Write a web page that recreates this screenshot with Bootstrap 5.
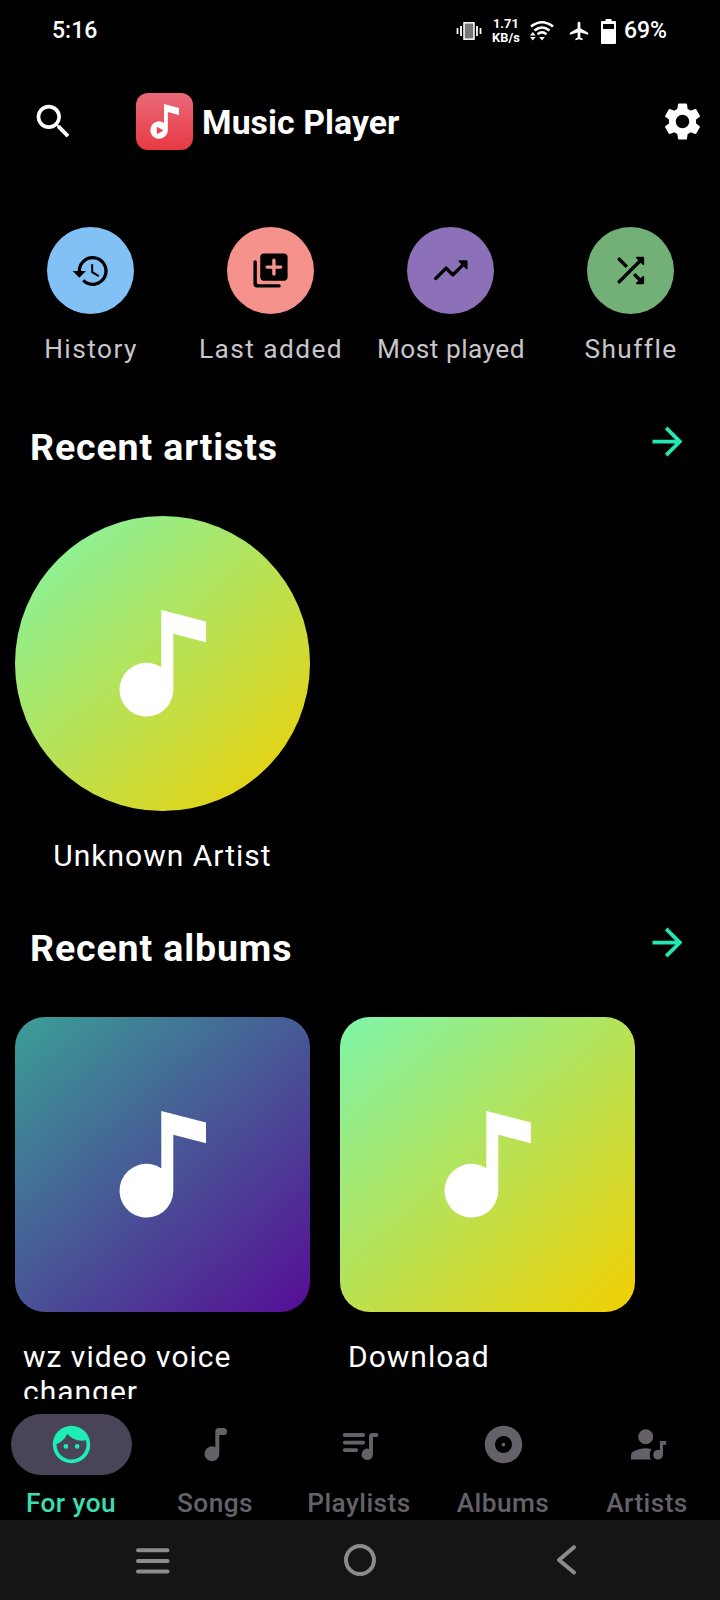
<!DOCTYPE html>
<html lang="en" data-bs-theme="dark">
<head>
<meta charset="utf-8">
<meta name="viewport" content="width=device-width, initial-scale=1">
<title>Music Player</title>
<link href="https://cdn.jsdelivr.net/npm/bootstrap@5.3.0/dist/css/bootstrap.min.css" rel="stylesheet">
<style>
  body { font-family: Roboto, "Liberation Sans", sans-serif; height: 1600px; background: #000; color: #fff; overflow: hidden; }
  svg { display: block; flex: none; }
  .icon-md { width: 45px; height: 45px; }
  .status-bar { height: 62px; padding: 0 53px 0 52px; font-size: 23px; font-weight: 500; line-height: 30px; }
  .net-speed { font-size: 12.8px; font-weight: 700; line-height: 14.5px; width: 30px; margin-left: 9px; }
  .wifi { margin-left: 9px; }
  .plane { margin-left: 14px; }
  .battery { margin-left: 11px; }
  .percent { margin-left: 8px; }
  .app-bar { height: 119px; padding: 0 15px 0 31px; }
  .app-logo { margin-left: 60px; }
  .app-title { font-size: 33.75px; font-weight: 700; line-height: 40px; padding-top: 2px; margin-left: 9px; letter-spacing: .08px; }
  .shortcuts { padding-top: 46px; }
  .shortcut-icon { width: 87px; height: 87px; margin-left: 1px; }
  .shortcut-label { font-size: 26.25px; line-height: 30px; margin-top: 20px; padding-left: 2px; color: #c8c5cb; letter-spacing: 1.45px; }
  .tight { letter-spacing: .5px; }
  .sky { background: #82c1f5; } .coral { background: #f6928c; } .violet { background: #8c70b8; } .leaf { background: #72b077; }
  .section-head { height: 51px; margin-top: 55px; padding: 0 30px; }
  .section-head.second { margin-top: 47px; }
  .section-title { font-size: 37.5px; font-weight: 700; line-height: 46px; margin: 5px 0 0; letter-spacing: .88px; }
  .section-head svg { color: #24e8b4; }
  .tiles { gap: 30px; margin-top: 46px; padding-left: 15px; }
  .tile { width: 295px; }
  .cover { width: 295px; height: 295px; border-radius: 30px; }
  .lime { background: linear-gradient(138deg, #7ef5aa, #f2cf00); }
  .indigo { background: linear-gradient(138deg, #3a9f96, #560d96); }
  .tile-label { font-size: 30px; line-height: 35px; margin-top: 27px; letter-spacing: 1px; }
  .tabs { height: 121px; padding-top: 15px; color: #646268; }
  .tab-pill { width: 121px; height: 61px; margin-left: -1px; }
  .tab-label { font-size: 26.25px; font-weight: 500; line-height: 30px; margin-top: 13px; margin-left: -2px; letter-spacing: .45px; white-space: nowrap; }
  .tab-on { color: #38dfb0; }
  .tab-on .tab-pill { background: #4a4458; color: #1eedb6; }
  .system-nav { height: 80px; background: #151515; }
</style>
</head>
<body class="d-flex flex-column m-0">

<svg width="0" height="0" class="position-absolute" aria-hidden="true">
  <symbol id="cover-note" viewBox="0 0 295 295"><path fill="#fff" d="M146.3 94L191 105.500V126.300L158.300 117.800V174A26.900 26.900 0 1 1 146.300 151.300Z"/></symbol>
  <symbol id="forward" viewBox="0 0 24 24"><path fill="currentColor" d="M12 4l-1.410 1.410L16.170 11H4v2h12.170l-5.580 5.590L12 20l8-8z"/></symbol>
</svg>

<div class="status-bar d-flex align-items-center flex-shrink-0">
  <span>5:16</span>
  <svg class="ms-auto" width="26" height="18" viewBox="0 0 26 18"><rect x="8" y=".8" width="10" height="16.400" fill="#777" stroke="#fff" stroke-width="1.500"/><path d="M5 4v10M21 4v10M1.500 6v6M24.500 6v6" stroke="#fff" stroke-width="1.800"/></svg>
  <div class="net-speed text-center">1.71<br>KB/s</div>
  <svg class="wifi" width="24" height="22" viewBox="0 0 24 22"><g fill="none" stroke="#fff" stroke-width="2.600"><path d="M1 6.500Q12 -2 23 6.500"/><path d="M4.500 10.500Q12 4.500 19.500 10.500"/><path d="M7.500 14.200Q12 10.700 16.500 14.200"/></g><path fill="#fff" d="M0 15.500L2.800 12l2.800 3.500zM0 17h5.600L2.800 20.500zM9.200 17h5.600L12 20.500z"/></svg>
  <svg class="plane" width="22" height="22" viewBox="0 0 24 24"><path fill="#fff" d="M22 16v-2l-8.500-5V3.500c0-.83-.67-1.500-1.500-1.500s-1.500.67-1.500 1.500V9L2 14v2l8.500-2.500V19L8 20.500V22l4-1 4 1v-1.500L13.500 19v-5.500L22 16z"/></svg>
  <svg class="battery" width="15" height="25" viewBox="0 0 15 25"><path fill="#fff" fill-rule="evenodd" d="M4.500 0h6v2H14q1 0 1 1v21q0 1-1 1H1q-1 0-1-1V3q0-1 1-1h3.500zM2 5v5h11V5z"/></svg>
  <span class="percent">69%</span>
</div>

<header class="app-bar d-flex align-items-center flex-shrink-0">
  <svg class="icon-md" viewBox="0 0 24 24"><path fill="#fff" d="M15.500 14h-.79l-.28-.27A6.471 6.471 0 0 0 16 9.500 6.500 6.500 0 1 0 9.500 16c1.610 0 3.090-.59 4.230-1.570l.27.28v.79l5 4.990L20.490 19l-4.990-5zm-6 0C7.010 14 5 11.990 5 9.500S7.010 5 9.500 5 14 7.010 14 9.500 11.990 14 9.500 14z"/></svg>
  <svg class="app-logo" width="57" height="57" viewBox="0 0 57 57"><defs><linearGradient id="logo-red" x2="0" y2="1"><stop stop-color="#ea6878"/><stop offset="1" stop-color="#e63a43"/></linearGradient></defs><rect width="57" height="57" rx="12" fill="url(#logo-red)"/><path fill="#fff" fill-rule="evenodd" d="M28 11L43 15V22L31.800 19V37A8.700 8.700 0 1 1 28 29.900ZM20.800 33.700V41.300L27.500 37.500Z"/></svg>
  <div class="app-title">Music Player</div>
  <svg class="icon-md ms-auto" viewBox="0 0 24 24"><path fill="#fff" d="M19.140 12.940c.04-.3.060-.61.060-.94 0-.32-.02-.64-.07-.94l2.030-1.580c.18-.14.23-.41.120-.61l-1.920-3.320c-.12-.22-.37-.29-.59-.22l-2.390.96c-.5-.38-1.030-.7-1.620-.94l-.36-2.540c-.04-.24-.24-.41-.48-.41h-3.840c-.24 0-.43.170-.47.410l-.36 2.540c-.59.240-1.130.570-1.620.94l-2.390-.96c-.22-.08-.47 0-.59.220L2.740 8.870c-.12.210-.08.470.120.610l2.030 1.580c-.05.3-.09.630-.09.940s.02.640.070.940l-2.030 1.580c-.18.140-.23.410-.12.610l1.920 3.320c.12.220.37.290.59.220l2.390-.96c.5.380 1.030.7 1.620.94l.36 2.540c.05.240.24.410.48.410h3.840c.24 0 .44-.17.470-.41l.36-2.540c.59-.24 1.130-.56 1.620-.94l2.390.96c.22.080.47 0 .59-.22l1.920-3.320c.12-.22.070-.47-.12-.61l-2.010-1.580zM12 15.600c-1.980 0-3.600-1.620-3.600-3.600s1.620-3.600 3.600-3.600 3.600 1.620 3.600 3.600-1.620 3.600-3.600 3.600z"/></svg>
</header>

<main class="flex-grow-1 overflow-hidden" style="min-height:0">
  <div class="shortcuts row g-0 text-center">
    <div class="col-3 d-flex flex-column align-items-center">
      <div class="shortcut-icon sky rounded-circle d-flex align-items-center justify-content-center"><svg width="40" height="40" viewBox="0 0 24 24"><path d="M13 3a9 9 0 0 0-9 9H1l4 4 4-4H6a7 7 0 1 1 7 7c-1.930 0-3.680-.79-4.940-2.060l-1.420 1.420A9 9 0 1 0 13 3zm-.9 5v5l4.280 2.540.6-1-3.680-2.190V8z"/></svg></div>
      <div class="shortcut-label">History</div>
    </div>
    <div class="col-3 d-flex flex-column align-items-center">
      <div class="shortcut-icon coral rounded-circle d-flex align-items-center justify-content-center"><svg width="41" height="41" viewBox="0 0 24 24"><path fill-rule="evenodd" d="M3 6c-.55 0-1 .45-1 1v13c0 1.100.9 2 2 2h13a1 1 0 0 0 0-2H5a1 1 0 0 1-1-1V7c0-.55-.45-1-1-1zM20 2H8c-1.100 0-2 .9-2 2v12c0 1.100.9 2 2 2h12c1.100 0 2-.9 2-2V4c0-1.100-.9-2-2-2zm-2 9h-3v3a1 1 0 0 1-2 0v-3h-3a1 1 0 0 1 0-2h3V6a1 1 0 0 1 2 0v3h3a1 1 0 0 1 0 2z"/></svg></div>
      <div class="shortcut-label">Last added</div>
    </div>
    <div class="col-3 d-flex flex-column align-items-center">
      <div class="shortcut-icon violet rounded-circle d-flex align-items-center justify-content-center"><svg width="41" height="41" viewBox="0 0 24 24"><path d="M16.850 6.850l1.440 1.440-4.880 4.880-3.290-3.290a1 1 0 0 0-1.410 0l-6 6.010a1 1 0 1 0 1.410 1.410L9.410 12l3.290 3.290a1 1 0 0 0 1.410 0l5.590-5.580 1.440 1.440a.5.5 0 0 0 .85-.35V6.500a.48.48 0 0 0-.49-.5h-4.290a.5.5 0 0 0-.36.850z"/></svg></div>
      <div class="shortcut-label tight">Most played</div>
    </div>
    <div class="col-3 d-flex flex-column align-items-center">
      <div class="shortcut-icon leaf rounded-circle d-flex align-items-center justify-content-center"><svg width="41" height="41" viewBox="0 0 24 24"><path d="M10.590 9.170L6.120 4.700a1 1 0 1 0-1.410 1.410l4.460 4.460 1.420-1.400zm4.760-4.320l1.190 1.190L4.700 17.880a1 1 0 1 0 1.410 1.410L17.960 7.460l1.190 1.190a.5.5 0 0 0 .85-.36V4.500c0-.28-.22-.5-.5-.5h-3.790a.5.5 0 0 0-.36.850zm-.52 8.560l-1.410 1.410 3.130 3.130-1.200 1.200a.5.5 0 0 0 .36.850h3.790c.28 0 .5-.22.5-.5v-3.790a.5.5 0 0 0-.85-.35l-1.190 1.190-3.130-3.140z"/></svg></div>
      <div class="shortcut-label">Shuffle</div>
    </div>
  </div>

  <div class="section-head d-flex justify-content-between align-items-start">
    <h2 class="section-title">Recent artists</h2>
    <svg class="icon-md"><use href="#forward"/></svg>
  </div>
  <div class="tiles d-flex">
    <div class="tile">
      <div class="cover lime rounded-circle"><svg width="295" height="295"><use href="#cover-note"/></svg></div>
      <div class="tile-label text-center">Unknown Artist</div>
    </div>
  </div>

  <div class="section-head second d-flex justify-content-between align-items-start">
    <h2 class="section-title">Recent albums</h2>
    <svg class="icon-md"><use href="#forward"/></svg>
  </div>
  <div class="tiles d-flex">
    <div class="tile">
      <div class="cover indigo"><svg width="295" height="295"><use href="#cover-note"/></svg></div>
      <div class="tile-label px-2">wz video voice changer</div>
    </div>
    <div class="tile">
      <div class="cover lime"><svg width="295" height="295"><use href="#cover-note"/></svg></div>
      <div class="tile-label px-2">Download</div>
    </div>
  </div>
</main>

<nav class="tabs row g-0 flex-shrink-0 text-center">
  <div class="col d-flex flex-column align-items-center tab-on">
    <div class="tab-pill rounded-pill d-flex align-items-center justify-content-center"><svg class="icon-md" viewBox="0 0 24 24"><path fill="currentColor" d="M10.250 13a1.250 1.250 0 1 1-2.500 0 1.250 1.250 0 0 1 2.500 0zM15 11.750a1.250 1.250 0 1 0 0 2.500 1.250 1.250 0 0 0 0-2.500zM22 12c0 5.520-4.480 10-10 10S2 17.520 2 12 6.480 2 12 2s10 4.480 10 10zm-2 0c0-.78-.12-1.530-.33-2.240-.7.150-1.420.240-2.170.240-3.130 0-5.920-1.440-7.760-3.690C8.690 8.870 6.600 10.880 4 11.860c.01.040 0 .090 0 .140 0 4.420 3.580 8 8 8s8-3.580 8-8z"/></svg></div>
    <div class="tab-label">For you</div>
  </div>
  <div class="col d-flex flex-column align-items-center">
    <div class="tab-pill d-flex align-items-center justify-content-center"><svg class="icon-md" viewBox="0 0 45 45"><path fill="currentColor" d="M22.300 9.500q0-3.500 3.500-3.500h4.700a3.500 3.500 0 0 1 0 7H26.300V31.800A7.400 7.400 0 1 1 22.300 25.200Z"/></svg></div>
    <div class="tab-label">Songs</div>
  </div>
  <div class="col d-flex flex-column align-items-center">
    <div class="tab-pill d-flex align-items-center justify-content-center"><svg class="icon-md" viewBox="0 0 45 45"><path d="M7.700 13h18.500M7.700 20.600h18.500M7.700 28.100h11.500" stroke="currentColor" stroke-width="3.800" stroke-linecap="round"/><path fill="currentColor" d="M32 14.500q0-3.400 3.400-3.400H39.500a1.900 1.900 0 0 1 0 3.800H36V32.500A5.700 5.700 0 1 1 32 26.900Z"/></svg></div>
    <div class="tab-label">Playlists</div>
  </div>
  <div class="col d-flex flex-column align-items-center">
    <div class="tab-pill d-flex align-items-center justify-content-center"><svg class="icon-md" viewBox="0 0 24 24"><path fill="currentColor" d="M12 2C6.480 2 2 6.480 2 12s4.480 10 10 10 10-4.480 10-10S17.520 2 12 2zm0 14.500c-2.490 0-4.500-2.010-4.500-4.500S9.510 7.500 12 7.500s4.500 2.010 4.500 4.500-2.010 4.500-4.500 4.500zm0-5.500c-.55 0-1 .45-1 1s.45 1 1 1 1-.45 1-1-.45-1-1-1z"/></svg></div>
    <div class="tab-label">Albums</div>
  </div>
  <div class="col d-flex flex-column align-items-center">
    <div class="tab-pill d-flex align-items-center justify-content-center"><svg class="icon-md" viewBox="0 0 45 45"><g fill="currentColor"><circle cx="20.700" cy="14.700" r="7.500"/><path d="M6 37.500V33q0-2.500 2.800-3.800Q17 24.800 26.500 27Q23.300 32 25.800 37.500Z"/><path d="M34.900 19h6.300v3.700H38V32.700A4.900 4.900 0 1 1 34.900 28.100Z"/></g></svg></div>
    <div class="tab-label">Artists</div>
  </div>
</nav>

<footer class="system-nav row g-0 align-items-center flex-shrink-0">
  <svg width="720" height="80" fill="none" stroke="#8c8c8c" stroke-width="4" stroke-linecap="round" stroke-linejoin="round"><path d="M138 30.200h29.500M138 41h29.500M138 51.500h29.500"/><circle cx="360" cy="40" r="14"/><path d="M574 27.200L559 40l15 12.500"/></svg>
</footer>

<script src="https://cdn.jsdelivr.net/npm/bootstrap@5.3.0/dist/js/bootstrap.bundle.min.js"></script>
</body>
</html>
